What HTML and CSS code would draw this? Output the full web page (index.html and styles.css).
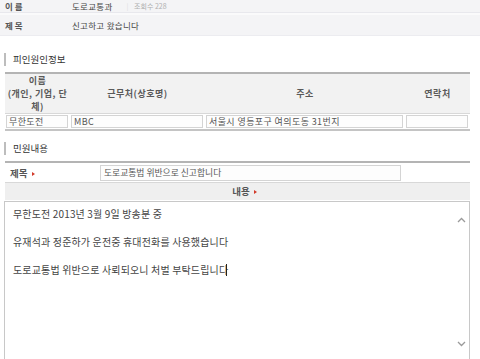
FILE: index.html
```html
<!DOCTYPE html>
<html>
<head>
  <meta charset="utf-8">
  <title>민원 신고</title>
<link rel="stylesheet" href="styles.css">
</head>
<body>
  <div class="info">
    <div class="info-row first">
      <span class="info-label">이 름</span>
      <span class="info-value">도로교통과</span>
      <span class="hits"><span class="pipe">|</span> 조회수 228</span>
    </div>
    <div class="info-row second">
      <span class="info-label">제 목</span>
      <span class="info-value">신고하고 왔습니다</span>
    </div>
  </div>

  <h3 class="section">피인원인정보</h3>
  <div class="person">
    <div class="head-cell">이름<br>(개인, 기업, 단<br>체)</div>
    <div class="head-cell">근무처(상호명)</div>
    <div class="head-cell">주소</div>
    <div class="head-cell">연락처</div>
    <div class="data-cell"><div class="field">무한도전</div></div>
    <div class="data-cell"><div class="field">MBC</div></div>
    <div class="data-cell"><div class="field">서울시 영등포구 여의도동 31번지</div></div>
    <div class="data-cell"><div class="field"></div></div>
  </div>

  <h3 class="section second-section">민원내용</h3>
  <div class="complaint">
    <div class="subject-row">
      <div class="subject-label">제목 <i class="mark"></i></div>
      <div class="subject-field">도로교통법 위반으로 신고합니다</div>
    </div>
    <div class="content-head">내용 <i class="mark"></i></div>
    <div class="content-box">
      <p>무한도전 2013년 3월 9일 방송분 중</p>
      <p>유재석과 정준하가 운전중 휴대전화를 사용했습니다</p>
      <p>도로교통법 위반으로 사뢰되오니 처벌 부탁드립니다<span class="caret"></span></p>
      <svg class="arrow up" width="9" height="6" viewBox="0 0 9 6"><path d="M1 5 L4.5 1.5 L8 5" fill="none" stroke="#9a9a9a" stroke-width="1.3"/></svg>
      <svg class="arrow down" width="9" height="6" viewBox="0 0 9 6"><path d="M1 1 L4.5 4.5 L8 1" fill="none" stroke="#9a9a9a" stroke-width="1.3"/></svg>
    </div>
  </div>
</body>
</html>
```

FILE: styles.css
```css
html, body {
  margin: 0;
  height: 100%;
  overflow: hidden;
}

body {
  font-family: "Noto Sans CJK KR", "Noto Sans", sans-serif;
  color: #444;
  background: #fff;
}

/* top summary rows */
.info {
  background: #f4f4f6;
}

.info-row {
  display: flex;
  align-items: center;
  font-size: 8.5px;
}

.info-row.first {
  height: 12px;
  border-bottom: 1px solid #e8e8ed;
}

.info-row.second {
  height: 20px;
  border-top: 2px solid #fafafb;
  border-bottom: 1px solid #ececf0;
}

.info-label {
  width: 67px;
  padding-left: 5px;
  font-weight: bold;
  color: #555;
}

.info-value {
  color: #444;
  letter-spacing: 0.3px;
}

.hits {
  margin-left: 14px;
  font-size: 7px;
  color: #b0b0b0;
}

.pipe {
  color: #ddd;
  margin-right: 4px;
}

/* section headings */
.section {
  margin: 17px 0 6px 4px;
  padding-left: 7px;
  height: 13px;
  line-height: 13px;
  font-size: 9.5px;
  font-weight: normal;
  color: #333;
  border-left: 2px solid #bdbdbd;
}

.second-section {
  margin-top: 11px;
}

/* person table */
.person {
  display: grid;
  grid-template-columns: 65px 135px 200px 65px;
  margin-left: 5px;
  width: 465px;
  border-top: 2px solid #b4b4b4;
  border-bottom: 2px solid #c4c4c4;
}

.head-cell {
  height: 39px;
  background: #f2f2f2;
  display: flex;
  align-items: center;
  justify-content: center;
  text-align: center;
  font-size: 9px;
  line-height: 13px;
  font-weight: bold;
  color: #5a5a5a;
  letter-spacing: 0.5px;
  border-bottom: 1px solid #d8d8d8;
}

.data-cell {
  padding: 1px 2px 1px 1px;
}

.field {
  height: 11px;
  border: 1px solid #d4d4d4;
  background: #fdfdfd;
  font-size: 9px;
  line-height: 11px;
  padding-left: 2px;
  color: #555;
  letter-spacing: 0.4px;
  white-space: nowrap;
  overflow: hidden;
}

/* complaint block */
.complaint {
  margin-left: 5px;
  width: 465px;
  border-top: 2px solid #b4b4b4;
}

.subject-row {
  display: flex;
  align-items: center;
  height: 19px;
  border-bottom: 1px solid #d8d8d8;
}

.subject-label {
  width: 90px;
  padding-left: 5px;
  font-size: 9.5px;
  font-weight: bold;
  color: #555;
}

.subject-field {
  width: 296px;
  height: 14px;
  border: 1px solid #d4d4d4;
  background: #fdfdfd;
  font-size: 8.8px;
  line-height: 14px;
  padding-left: 3px;
  color: #555;
}

.mark {
  display: inline-block;
  width: 0;
  height: 0;
  margin-left: 2px;
  vertical-align: middle;
  border-left: 3px solid #d23a2a;
  border-top: 2px solid transparent;
  border-bottom: 2px solid transparent;
}

.content-head {
  height: 17px;
  line-height: 17px;
  background: #efefef;
  text-align: center;
  font-size: 9.5px;
  font-weight: bold;
  color: #555;
  padding-left: 14px;
  border-bottom: 1px solid #fff;
}

.content-box {
  position: relative;
  margin-left: -1px;
  width: 456px;
  height: 180px;
  border: 1px solid #c8c8c8;
  padding: 5px 0 0 8px;
  font-size: 10px;
  line-height: 14px;
  letter-spacing: 0.15px;
  color: #444;
}

.content-box p {
  margin: 0 0 14px;
}

.caret {
  display: inline-block;
  width: 1px;
  height: 12px;
  margin-left: -2px;
  vertical-align: -2px;
  background: #222;
}

.arrow {
  position: absolute;
  right: 3px;
}

.arrow.up {
  top: 15px;
}

.arrow.down {
  top: 139px;
}
```
